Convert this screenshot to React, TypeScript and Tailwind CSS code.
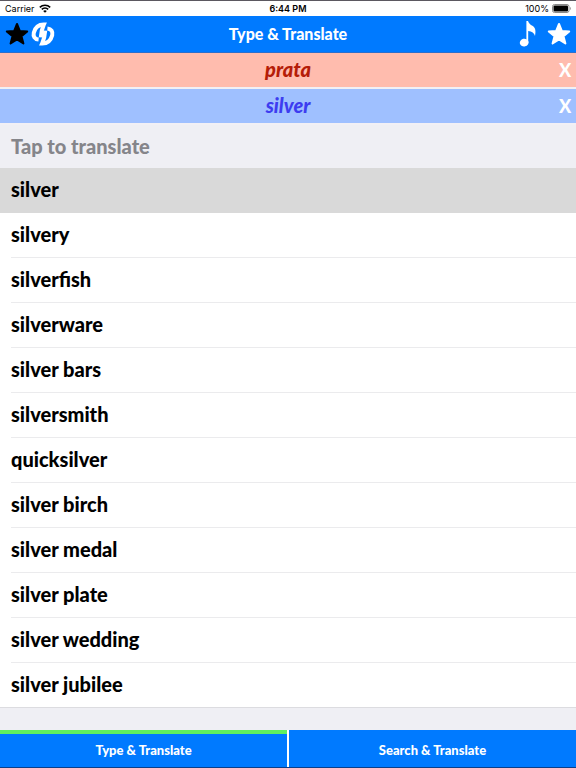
import { useState } from "react";

const WORDS = [
  "silver",
  "silvery",
  "silverfish",
  "silverware",
  "silver bars",
  "silversmith",
  "quicksilver",
  "silver birch",
  "silver medal",
  "silver plate",
  "silver wedding",
  "silver jubilee",
];

const StarIcon = () => (
  <svg viewBox="0 0 24 24" className="w-6 h-6" fill="currentColor" stroke="currentColor" strokeWidth="2" strokeLinejoin="round">
    <path d="M12 2l2.8 6.9 7.4.5-5.7 4.8 1.9 7.3L12 17.5l-6.4 4 1.9-7.3-5.7-4.8 7.4-.5z" />
  </svg>
);

const SwapLogo = () => (
  <svg viewBox="0 0 24 24" className="w-6 h-6" fill="none" stroke="currentColor" strokeWidth="4">
    <path d="M7.600 17.600C3.600 17.200 2 14.200 2.800 10.800 4 6 7.600 2.600 12.800 2.600c-1.600 3.400-2.600 7.400-3 12.800" />
    <path d="M16.400 6.400c4 .4 5.600 3.400 4.800 6.800-1.200 4.800-4.800 8.200-10 8.200 1.600-3.400 2.600-7.400 3-12.800" />
  </svg>
);

const NoteIcon = () => (
  <svg viewBox="0 0 18 28" className="w-[18px] h-7" fill="currentColor">
    <ellipse cx="5.200" cy="22.600" rx="4.400" ry="3.900" transform="rotate(-15 5.200 22.600)" />
    <path d="M7.400 1h1.600c.6 2.400 2.400 3.600 4.400 4.800 3.200 2 3.600 5.400 2.600 10.200-.8-3.200-3-4.600-6.800-5v12H7.400z" />
  </svg>
);

const StatusBar = () => (
  <div className="grid grid-cols-3 items-center h-4 border-t border-[#5b5860] bg-white px-[5px] font-['Inter',sans-serif] text-[9px] leading-none text-black">
    <div className="flex items-center gap-1">
      <span>Carrier</span>
      <svg viewBox="0 0 12 9" className="w-3 h-[9px]" fill="none" stroke="currentColor" strokeWidth="1.600">
        <path d="M.8 3.400a7.400 7.400 0 0 1 10.400 0M2.800 5.400a4.600 4.600 0 0 1 6.400 0" />
        <path d="M6 8.800L4.200 7a2.600 2.600 0 0 1 3.600 0z" fill="currentColor" stroke="none" />
      </svg>
    </div>
    <span className="text-center font-semibold">6:44 PM</span>
    <div className="flex items-center justify-end gap-[3px]">
      <span>100%</span>
      <svg viewBox="0 0 19 9" className="w-[19px] h-[9px]">
        <rect x=".5" y=".5" width="16.500" height="8" rx="2" fill="none" stroke="#8a8a8a" />
        <rect x="1.500" y="1.500" width="14.500" height="6" rx="1" fill="#000" />
        <path d="M18 3v3c1-.4 1-2.600 0-3z" fill="#8a8a8a" />
      </svg>
    </div>
  </div>
);

type FieldProps = {
  label: string;
  value: string;
  onChange: (value: string) => void;
  className: string;
};

const Field = ({ label, value, onChange, className }: FieldProps) => (
  <div className={`grid grid-cols-[22px_1fr_22px] items-center h-9 border-b-2 border-[#f2f0f5] ${className}`}>
    <input
      aria-label={label}
      value={value}
      onChange={(e) => onChange(e.target.value)}
      className="col-start-2 min-w-0 pb-0.5 bg-transparent text-center text-[20px] leading-6 font-black italic outline-none"
    />
    <button aria-label={`Clear ${label}`} onClick={() => onChange("")} className="text-[18px] leading-6 font-black text-white">
      X
    </button>
  </div>
);

const App = () => {
  const [source, setSource] = useState("prata");
  const [target, setTarget] = useState("silver");
  const [selected, setSelected] = useState("silver");
  const [tab, setTab] = useState("type");

  const pick = (word: string) => {
    setSelected(word);
    setTarget(word);
  };

  return (
    <div className="flex flex-col min-h-screen bg-[#efeff4] font-['Lato',sans-serif]">
      <StatusBar />

      {/* Navigation bar */}
      <header className="grid grid-cols-[1fr_auto_1fr] items-center h-[37px] px-[5px] bg-[#007aff] border-b border-[#2d6fcc] text-white">
        <div className="flex items-center gap-[2px]">
          <button aria-label="Favourites" className="text-black">
            <StarIcon />
          </button>
          <button aria-label="Swap languages">
            <SwapLogo />
          </button>
        </div>
        <h1 className="text-[16px] leading-5 font-black">Type &amp; Translate</h1>
        <div className="flex items-center justify-end gap-[10px]">
          <button aria-label="Play sound">
            <NoteIcon />
          </button>
          <button aria-label="Add to favourites">
            <StarIcon />
          </button>
        </div>
      </header>

      <Field label="Portuguese" value={source} onChange={setSource} className="bg-[#ffbcae] text-[#b51d08]" />
      <Field label="English" value={target} onChange={setTarget} className="bg-[#9fc0ff] text-[#3d3df0]" />

      {/* Suggestions */}
      <h2 className="flex items-center h-[43px] pb-0.5 px-[11px] text-[20px] leading-6 font-black text-[#85858a]">Tap to translate</h2>
      <ul className="bg-white border-b border-[#dcdce0]">
        {WORDS.map((word, i) => (
          <li key={word} className={selected === word ? "bg-[#d9d9d9]" : "bg-white"}>
            <button onClick={() => pick(word)} className="block w-full pl-[11px] text-left">
              <span
                className={`flex items-center pb-0.5 text-[20px] leading-6 font-black text-black ${
                  i === WORDS.length - 1 ? "h-11" : "h-[45px] border-b"
                } ${selected === word ? "border-transparent" : "border-[#ebebed]"}`}
              >
                {word}
              </span>
            </button>
          </li>
        ))}
      </ul>

      {/* Bottom tabs */}
      <nav className="grid grid-cols-2 gap-[2px] h-[38px] mt-auto bg-white border-b border-[#0a3f8a]">
        <button
          onClick={() => setTab("type")}
          className={`border-t-4 pb-0.5 bg-[#007aff] text-[13px] leading-4 font-black text-white ${tab === "type" ? "border-[#5ff05f]" : "border-[#007aff]"}`}
        >
          Type &amp; Translate
        </button>
        <button
          onClick={() => setTab("search")}
          className={`border-t-4 pb-0.5 bg-[#007aff] text-[13px] leading-4 font-black text-white ${tab === "search" ? "border-[#5ff05f]" : "border-[#007aff]"}`}
        >
          Search &amp; Translate
        </button>
      </nav>
    </div>
  );
};

export default App;
